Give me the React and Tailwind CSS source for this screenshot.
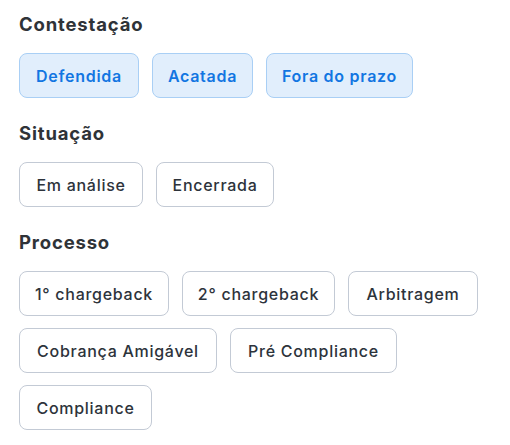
import React from "react";

const sections = [
  {
    title: "Contestação",
    active: true,
    items: [
      ["Defendida", "w-[120px]"],
      ["Acatada", "w-[101px]"],
      ["Fora do prazo", "w-[147px]"],
    ],
  },
  {
    title: "Situação",
    active: false,
    items: [
      ["Em análise", "w-[124px]"],
      ["Encerrada", "w-[118px]"],
    ],
  },
  {
    title: "Processo",
    active: false,
    items: [
      ["1° chargeback", "w-[150px]"],
      ["2° chargeback", "w-[153px]"],
      ["Arbitragem", "w-[130px]"],
      ["Cobrança Amigável", "w-[198px]"],
      ["Pré Compliance", "w-[167px]"],
      ["Compliance", "w-[133px]"],
    ],
  },
];

export default function App() {
  return (
    <div
      className="w-[510px] h-[445px] bg-white pl-[19px] pr-4 pt-3 flex flex-col gap-[23px]"
      style={{ fontFamily: "Inter, 'Noto Sans', sans-serif" }}
    >
      {sections.map((s) => (
        <div key={s.title} className="flex flex-col gap-[17px]">
          <h2 className="h-6 leading-6 text-[18.5px] tracking-[0.045em] font-bold text-[#2f3338]">{s.title}</h2>
          <div className="flex flex-wrap gap-x-[13px] gap-y-3">
            {s.items.map(([it, w]) => (
              <button
                key={it}
                className={
                  (s.active
                    ? "h-[45px] rounded-lg border border-[#a9cff5] bg-[#e1eefc] text-[#1276e2] font-semibold"
                    : "h-[45px] rounded-lg border border-[#c3cad5] bg-white text-[#2d333b] font-medium") +
                  " " +
                  w +
                  " flex items-center justify-center text-[16px] tracking-[0.045em] whitespace-nowrap"
                }
              >
                {it}
              </button>
            ))}
          </div>
        </div>
      ))}
    </div>
  );
}
